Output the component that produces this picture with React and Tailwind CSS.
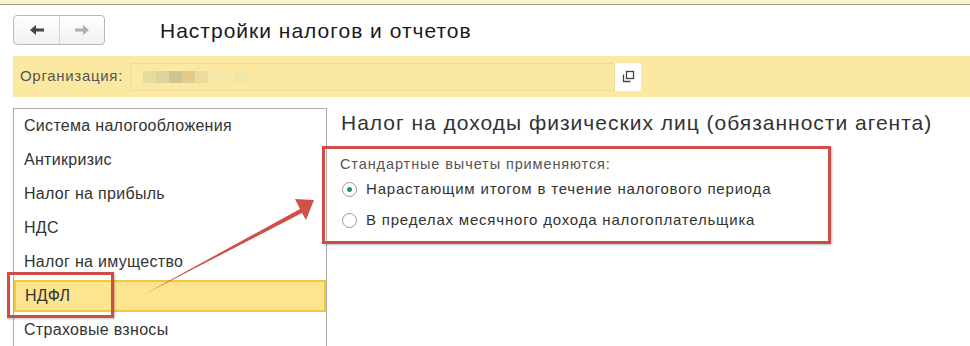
import React from 'react';

const items = [
  'Система налогообложения',
  'Антикризис',
  'Налог на прибыль',
  'НДС',
  'Налог на имущество',
  'НДФЛ',
  'Страховые взносы',
];

const blurBlocks = ['#e6dca0', '#ddd49c', '#cfc493', '#e5cb8a', '#ecdb9e', '#f6e8a8', '#f8eaa6', '#eee9a8'];

function Radio({ checked }) {
  return (
    <span className="w-[15px] h-[15px] rounded-full border border-[#9a9a9a] bg-white flex items-center justify-center shrink-0">
      {checked && <span className="w-[5px] h-[5px] rounded-full bg-[#1f9a55]" />}
    </span>
  );
}

export default function App() {
  return (
    <div className="relative w-[970px] h-[346px] overflow-hidden bg-white text-[#333]" style={{ fontFamily: '"Liberation Sans", Arial, sans-serif' }}>
      {/* top strip */}
      <div className="h-[5px] bg-[#fbf0c9] border-b border-[#a89d8a]" />

      {/* header */}
      <div className="flex items-center pl-[13px] pt-[10px] h-[40px]">
        <div className="flex h-[30px] w-[92px] rounded-[4px] border border-[#b9b9b9] bg-gradient-to-b from-white to-[#f1f1f1]">
          <div className="w-[46px] flex items-center justify-center border-r border-[#d4d4d4]">
            <svg width="16" height="12" viewBox="0 0 16 12">
              <path d="M1 6 L7 1 L7 4.5 L15 4.5 L15 7.5 L7 7.5 L7 11 Z" fill="#444" />
            </svg>
          </div>
          <div className="flex-1 flex items-center justify-center">
            <svg width="16" height="12" viewBox="0 0 16 12">
              <path d="M15 6 L9 1 L9 4.5 L1 4.5 L1 7.5 L9 7.5 L9 11 Z" fill="#b0b0b0" />
            </svg>
          </div>
        </div>
        <h1 className="ml-[55px] text-[21px] tracking-[1px] leading-none text-[#1a1a1a]">Настройки налогов и отчетов</h1>
      </div>

      {/* organization band */}
      <div className="ml-[13px] mt-[11px] h-[41px] bg-[#fbe8a1] flex items-center">
        <span className="ml-[7px] w-[110px] text-[15px] tracking-[0.7px] text-[#555]">Организация:</span>
        <div className="flex h-[28px]">
          <div className="w-[485px] border border-[#eadb9f] rounded-l-[2px] flex items-center pl-[12px]">
            {blurBlocks.map((c, i) => (
              <span key={i} className="w-[13px] h-[12px]" style={{ backgroundColor: c }} />
            ))}
          </div>
          <div className="w-[26px] bg-white rounded-r-[3px] flex items-center justify-center">
            <svg width="13" height="13" viewBox="0 0 13 13" fill="none" stroke="#444" strokeWidth="1.3">
              <rect x="4.5" y="1.5" width="7" height="7" />
              <path d="M1.5 4.5 V11.5 H8.5" />
            </svg>
          </div>
        </div>
      </div>

      {/* body */}
      <div className="flex mt-[11px] ml-[13px]">
        <div className="w-[314px] h-[260px] border border-[#ababab] border-b-0">
          {items.map((t) => (
            <div
              key={t}
              className={
                t === 'НДФЛ'
                  ? 'h-[32px] my-[1px] flex items-center pl-[9px] text-[16px] tracking-[0.3px] bg-[#fde590] border-2 border-[#f1c93f]'
                  : 'h-[34px] flex items-center pl-[10px] text-[16px] tracking-[0.3px] text-[#333]'
              }
            >
              {t}
            </div>
          ))}
        </div>

        <div className="flex-1 -ml-[5px]">
          <h2 className="pl-[19px] pt-[2px] text-[21px] tracking-[1px] leading-[26px] text-[#333]">
            Налог на доходы физических лиц (обязанности агента)
          </h2>
          <div className="relative mt-[10px] w-[509px] h-[98px] border-[3px] border-[#cc4e47] pl-[15px] pt-[7px] shadow-[1px_1px_2px_rgba(0,0,0,0.25)]">
            <div className="text-[14.5px] tracking-[0.9px] text-[#555] leading-[16px]">Стандартные вычеты применяются:</div>
            <div className="flex items-center gap-[9px] mt-[9px] pl-[2px] text-[15px] tracking-[0.8px] leading-[16px]">
              <Radio checked />
              <span>Нарастающим итогом в течение налогового периода</span>
            </div>
            <div className="flex items-center gap-[9px] mt-[15px] pl-[2px] text-[15px] tracking-[0.8px] leading-[16px]">
              <Radio />
              <span>В пределах месячного дохода налогоплательщика</span>
            </div>
          </div>
        </div>
      </div>

      {/* annotations */}
      <div className="absolute left-[7px] top-[272px] w-[107px] h-[46px] border-[3px] border-[#cc4e47] shadow-[1px_1px_2px_rgba(0,0,0,0.25)]" />
      <svg className="absolute left-0 top-0 pointer-events-none" width="970" height="346">
        <polygon
          points="143,295 300,209 295,199 314,200 306,220 302,213"
          fill="#cf5046"
        />
      </svg>
    </div>
  );
}
